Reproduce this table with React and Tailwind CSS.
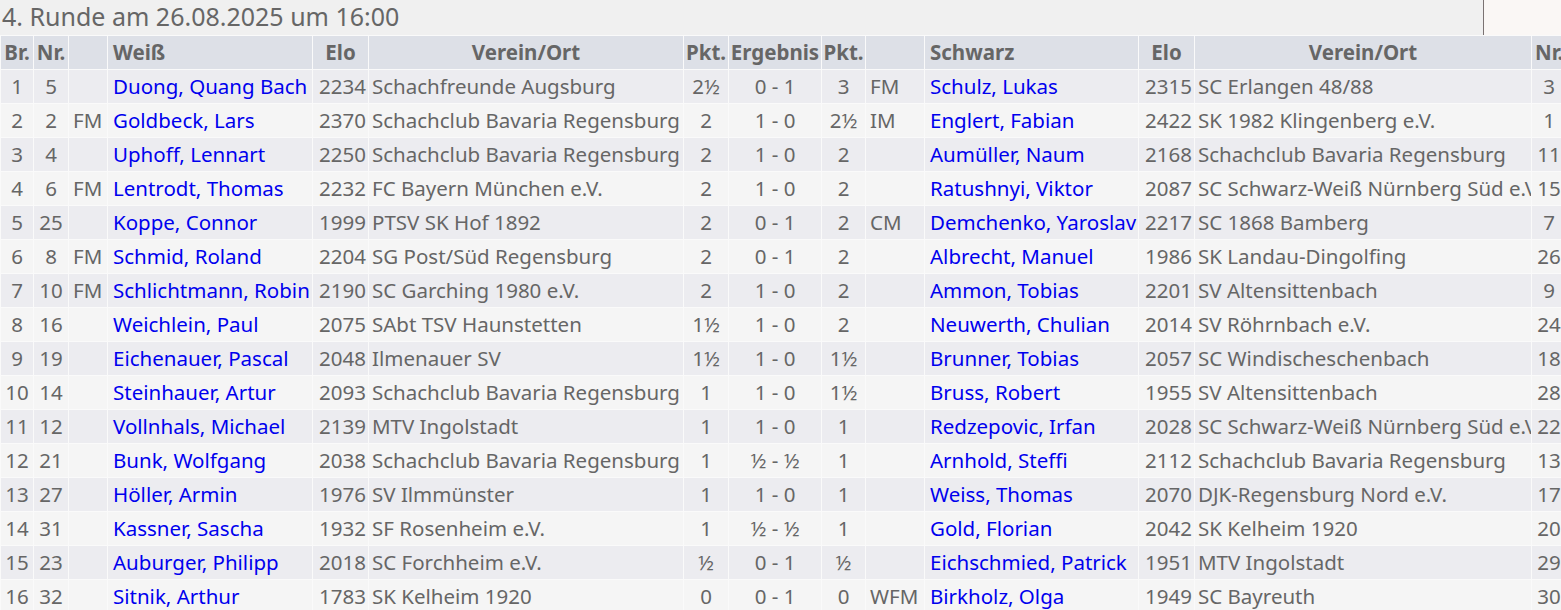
import React from "react";

const rows = [
  ["1", "5", "", "Duong, Quang Bach", "2234", "Schachfreunde Augsburg", "2½", "0 - 1", "3", "FM", "Schulz, Lukas", "2315", "SC Erlangen 48/88", "3"],
  ["2", "2", "FM", "Goldbeck, Lars", "2370", "Schachclub Bavaria Regensburg", "2", "1 - 0", "2½", "IM", "Englert, Fabian", "2422", "SK 1982 Klingenberg e.V.", "1"],
  ["3", "4", "", "Uphoff, Lennart", "2250", "Schachclub Bavaria Regensburg", "2", "1 - 0", "2", "", "Aumüller, Naum", "2168", "Schachclub Bavaria Regensburg", "11"],
  ["4", "6", "FM", "Lentrodt, Thomas", "2232", "FC Bayern München e.V.", "2", "1 - 0", "2", "", "Ratushnyi, Viktor", "2087", "SC Schwarz-Weiß Nürnberg Süd e.V.", "15"],
  ["5", "25", "", "Koppe, Connor", "1999", "PTSV SK Hof 1892", "2", "0 - 1", "2", "CM", "Demchenko, Yaroslav", "2217", "SC 1868 Bamberg", "7"],
  ["6", "8", "FM", "Schmid, Roland", "2204", "SG Post/Süd Regensburg", "2", "0 - 1", "2", "", "Albrecht, Manuel", "1986", "SK Landau-Dingolfing", "26"],
  ["7", "10", "FM", "Schlichtmann, Robin", "2190", "SC Garching 1980 e.V.", "2", "1 - 0", "2", "", "Ammon, Tobias", "2201", "SV Altensittenbach", "9"],
  ["8", "16", "", "Weichlein, Paul", "2075", "SAbt TSV Haunstetten", "1½", "1 - 0", "2", "", "Neuwerth, Chulian", "2014", "SV Röhrnbach e.V.", "24"],
  ["9", "19", "", "Eichenauer, Pascal", "2048", "Ilmenauer SV", "1½", "1 - 0", "1½", "", "Brunner, Tobias", "2057", "SC Windischeschenbach", "18"],
  ["10", "14", "", "Steinhauer, Artur", "2093", "Schachclub Bavaria Regensburg", "1", "1 - 0", "1½", "", "Bruss, Robert", "1955", "SV Altensittenbach", "28"],
  ["11", "12", "", "Vollnhals, Michael", "2139", "MTV Ingolstadt", "1", "1 - 0", "1", "", "Redzepovic, Irfan", "2028", "SC Schwarz-Weiß Nürnberg Süd e.V.", "22"],
  ["12", "21", "", "Bunk, Wolfgang", "2038", "Schachclub Bavaria Regensburg", "1", "½ - ½", "1", "", "Arnhold, Steffi", "2112", "Schachclub Bavaria Regensburg", "13"],
  ["13", "27", "", "Höller, Armin", "1976", "SV Ilmmünster", "1", "1 - 0", "1", "", "Weiss, Thomas", "2070", "DJK-Regensburg Nord e.V.", "17"],
  ["14", "31", "", "Kassner, Sascha", "1932", "SF Rosenheim e.V.", "1", "½ - ½", "1", "", "Gold, Florian", "2042", "SK Kelheim 1920", "20"],
  ["15", "23", "", "Auburger, Philipp", "2018", "SC Forchheim e.V.", "½", "0 - 1", "½", "", "Eichschmied, Patrick", "1951", "MTV Ingolstadt", "29"],
  ["16", "32", "", "Sitnik, Arthur", "1783", "SK Kelheim 1920", "0", "0 - 1", "0", "WFM", "Birkholz, Olga", "1949", "SC Bayreuth", "30"],
];

const cellBase = "h-[33px] p-0 whitespace-nowrap overflow-hidden leading-[33px]";

export default function App() {
  return (
    <div
      className="w-[1561px] h-[610px] overflow-hidden bg-[#f0f0f0] text-[#666666]"
      style={{ fontFamily: '"Noto Sans", "Open Sans", sans-serif' }}
    >
      <div className="flex h-[35px]">
        <h1 className="flex-1 pl-[2px] text-[25px] leading-[33px] font-normal text-[#666666]">
          4. Runde am 26.08.2025 um 16:00
        </h1>
        <div className="w-[78px] border-l border-[#7a7272] bg-[#faf7f5]" />
      </div>
      <table className="table-fixed border-separate border-spacing-[1px] bg-[#fafafa] text-[20.5px] w-[1567px]">
        <colgroup>
          <col className="w-[32px]" />
          <col className="w-[34px]" />
          <col className="w-[38px]" />
          <col className="w-[204px]" />
          <col className="w-[55px]" />
          <col className="w-[314px]" />
          <col className="w-[44px]" />
          <col className="w-[92px]" />
          <col className="w-[43px]" />
          <col className="w-[58px]" />
          <col className="w-[213px]" />
          <col className="w-[55px]" />
          <col className="w-[336px]" />
          <col className="w-[34px]" />
        </colgroup>
        <thead>
          <tr className="bg-[#dde0e7] font-bold">
            <th className={`${cellBase} text-center`}>Br.</th>
            <th className={`${cellBase} text-center`}>Nr.</th>
            <th className={cellBase}></th>
            <th className={`${cellBase} text-left pl-[5px]`}>Weiß</th>
            <th className={`${cellBase} text-center`}>Elo</th>
            <th className={`${cellBase} text-center`}>Verein/Ort</th>
            <th className={`${cellBase} text-center`}>Pkt.</th>
            <th className={`${cellBase} text-center`}>Ergebnis</th>
            <th className={`${cellBase} text-center`}>Pkt.</th>
            <th className={cellBase}></th>
            <th className={`${cellBase} text-left pl-[5px]`}>Schwarz</th>
            <th className={`${cellBase} text-center`}>Elo</th>
            <th className={`${cellBase} text-center`}>Verein/Ort</th>
            <th className={`${cellBase} text-left pl-[3px]`}>Nr.</th>
          </tr>
        </thead>
        <tbody>
          {rows.map((r, i) => (
            <tr key={i} className={i % 2 === 0 ? "bg-[#ececf0]" : "bg-[#f5f5f5]"}>
              <td className={`${cellBase} text-center`}>{r[0]}</td>
              <td className={`${cellBase} text-center`}>{r[1]}</td>
              <td className={`${cellBase} pl-[4px]`}>{r[2]}</td>
              <td className={`${cellBase} pl-[5px] text-[#0000ee]`}>{r[3]}</td>
              <td className={`${cellBase} text-right pr-[2px]`}>{r[4]}</td>
              <td className={`${cellBase} pl-[3px]`}>{r[5]}</td>
              <td className={`${cellBase} text-center`}>{r[6]}</td>
              <td className={`${cellBase} text-center`}>{r[7]}</td>
              <td className={`${cellBase} text-center`}>{r[8]}</td>
              <td className={`${cellBase} pl-[4px]`}>{r[9]}</td>
              <td className={`${cellBase} pl-[5px] text-[#0000ee]`}>{r[10]}</td>
              <td className={`${cellBase} text-right pr-[2px]`}>{r[11]}</td>
              <td className={`${cellBase} pl-[3px]`}>{r[12]}</td>
              <td className={`${cellBase} text-center`}>{r[13]}</td>
            </tr>
          ))}
        </tbody>
      </table>
    </div>
  );
}
